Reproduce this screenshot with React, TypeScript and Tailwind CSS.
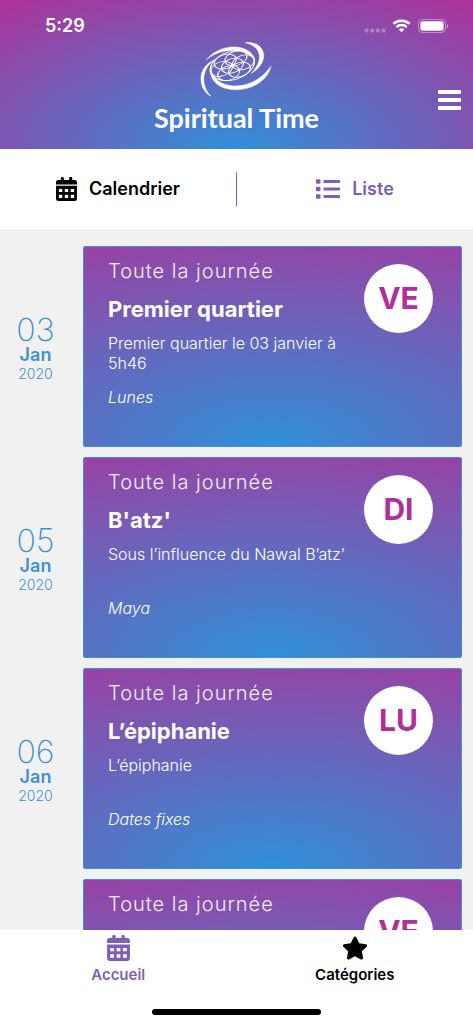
import React from "react";
import { FaList, FaStar } from "react-icons/fa";

type Entry = {
  day: string;
  month: string;
  year: string;
  weekday: string;
  time: string;
  title: string;
  text: string;
  category: string;
};

const entries: Entry[] = [
  { day: "03", month: "Jan", year: "2020", weekday: "VE", time: "Toute la journée", title: "Premier quartier", text: "Premier quartier le 03 janvier à 5h46", category: "Lunes" },
  { day: "05", month: "Jan", year: "2020", weekday: "DI", time: "Toute la journée", title: "B'atz'", text: "Sous l’influence du Nawal B’atz’", category: "Maya" },
  { day: "06", month: "Jan", year: "2020", weekday: "LU", time: "Toute la journée", title: "L’épiphanie", text: "L’épiphanie", category: "Dates fixes" },
  { day: "", month: "", year: "", weekday: "VE", time: "Toute la journée", title: "", text: "", category: "" },
];

function Logo() {
  return (
    <svg viewBox="3 6 270 195" className="h-[65px] w-[90px]" fill="none" stroke="#fff" aria-hidden="true">
      <g fill="#fff" strokeWidth="1.5">
        <path d="M49 71C72 43 112 28 146 34C170 38 190 51 194 72C184 56 166 48 144 45C112 40 78 48 49 71Z" />
        <path d="M166 20C196 16 221 33 221 59C221 80 206 98 184 112C202 92 210 76 208 58C206 38 190 26 166 20Z" />
        <path d="M73 72C48 90 38 115 42 140C45 157 52 170 63 181C44 170 33 152 33 128C33 103 48 82 73 72Z" />
        <path d="M62 94C66 128 91 147 130 150C177 152 216 128 243 91C232 134 187 162 136 161C88 160 56 134 62 94Z" />
      </g>
      <g transform="rotate(-17 127 89) translate(127 89) scale(1 .62)" strokeWidth="3.6">
        <circle r="68" />
        <circle r="34" />
        <circle cx="34" r="34" />
        <circle cx="17" cy="29" r="34" />
        <circle cx="-17" cy="29" r="34" />
        <circle cx="-34" r="34" />
        <circle cx="-17" cy="-29" r="34" />
        <circle cx="17" cy="-29" r="34" />
      </g>
    </svg>
  );
}

function CalendarIcon({ className }: { className: string }) {
  return (
    <svg viewBox="0 0 22 25" className={className} fill="currentColor" aria-hidden="true">
      <path d="M5 1.2a1.2 1.2 0 0 1 1.2-1.2h.8a1.2 1.2 0 0 1 1.2 1.2V3h5.6V1.200a1.200 1.200 0 0 1 1.200-1.200h.8a1.200 1.200 0 0 1 1.200 1.200V3h2.600A2.400 2.400 0 0 1 22 5.400V7.700H0V5.400A2.400 2.400 0 0 1 2.400 3H5z" />
      <path
        fillRule="evenodd"
        d="M0 9.200H22V22.600A2.400 2.400 0 0 1 19.600 25H2.400A2.400 2.400 0 0 1 0 22.600zM3 12.400v3.300h3.600v-3.300zM9.200 12.400v3.300h3.600v-3.300zM15.400 12.400v3.300h3.600v-3.300zM3 18.500v3.300h3.600v-3.300zM9.200 18.500v3.300h3.600v-3.300zM15.400 18.500v3.300h3.600v-3.300z"
      />
    </svg>
  );
}

function StatusIcons() {
  return (
    <svg viewBox="0 0 86 16" className="h-4 w-[86px]" fill="#fff" aria-hidden="true">
      <g opacity=".3">
        <rect x="1.500" y="10.500" width="4" height="4" rx="1.500" />
        <rect x="7.200" y="10.500" width="4" height="4" rx="1.500" />
        <rect x="12.800" y="10.500" width="4" height="4" rx="1.500" />
        <rect x="18.500" y="10.500" width="4" height="4" rx="1.500" />
      </g>
      <g fill="none" stroke="#fff" strokeWidth="2.500">
        <path d="M30.300 5.800a12.200 12.200 0 0 1 16.400 0" />
        <path d="M33.300 9.100a7.600 7.600 0 0 1 10.400 0" />
      </g>
      <path d="M35.800 11.400a4 4 0 0 1 5.400 0L38.500 14.300z" />
      <rect x="55.500" y="1.500" width="27" height="13" rx="3.800" fill="none" stroke="#fff" opacity=".4" />
      <rect x="57.400" y="3.300" width="23.200" height="9.400" rx="2.200" />
      <path d="M84 6v4.200c1.400-.5 1.400-3.700 0-4.200z" opacity=".5" />
    </svg>
  );
}

function EventRow({ entry }: { entry: Entry }) {
  return (
    <li className="flex shrink-0">
      <div className="flex w-[83px] shrink-0 flex-col items-center justify-center pt-1 pr-3 text-[#3d92d4]">
        {entry.day && (
          <>
            <span className="text-[32px] leading-8 font-extralight">{entry.day}</span>
            <span className="text-lg leading-[18px] font-semibold">{entry.month}</span>
            <span className="text-sm leading-5 font-light">{entry.year}</span>
          </>
        )}
      </div>
      <article className="flex min-h-[201px] flex-1 rounded-xs border border-[#3d92d4] bg-[radial-gradient(155%_133%_at_50%_100%,#2f90d8,#b03098)] pt-3 pr-7 pl-6 text-white">
        <div className="flex-1">
          <p className="text-xl leading-6 font-light tracking-wider text-white/90">{entry.time}</p>
          {entry.title && (
            <>
              <h2 className="mt-3 text-[22px] leading-7 font-bold">{entry.title}</h2>
              <p className="mt-[10px] min-h-10 text-base leading-5 font-light">{entry.text}</p>
              <p className="mt-3 text-base leading-6 font-light italic">{entry.category}</p>
            </>
          )}
        </div>
        <div className="mt-[5px] flex size-[69px] shrink-0 items-center justify-center rounded-full bg-white text-[30px] font-bold text-[#b0309a]">
          {entry.weekday}
        </div>
      </article>
    </li>
  );
}

export default function App() {
  return (
    <div className="flex h-screen flex-col overflow-hidden bg-[#f1f1f1] font-['Inter','Liberation_Sans',sans-serif]">
      <header className="shrink-0 bg-[radial-gradient(83%_128%_at_50%_100%,#2f90d8,#b03098)] pb-4 text-white">
        <div className="flex items-center justify-between pt-[14px] pr-6 pl-[45px]">
          <span className="text-lg leading-6 font-semibold">5:29</span>
          <StatusIcons />
        </div>
        <div className="grid grid-cols-[1fr_auto_1fr] items-center">
          <div className="col-start-2 flex flex-col items-center">
            <Logo />
            <h1 className="font-['Lato',sans-serif] text-[27px] leading-[30px] font-bold">Spiritual Time</h1>
          </div>
          <button type="button" aria-label="Menu" className="mr-3 justify-self-end pt-7">
            <svg viewBox="0 0 23 20" className="h-5 w-[23px]" fill="#fff" aria-hidden="true">
              <rect y="0" width="23" height="4" rx="1" />
              <rect y="8" width="23" height="4" rx="1" />
              <rect y="16" width="23" height="4" rx="1" />
            </svg>
          </button>
        </div>
      </header>

      <div className="flex h-20 shrink-0 items-center bg-white text-lg font-semibold">
        <button type="button" className="flex flex-1 items-center justify-center gap-3">
          <CalendarIcon className="h-6 w-[21px]" />
          Calendrier
        </button>
        <div className="h-[34px] w-px bg-[#7d5fb8]" />
        <button type="button" className="flex flex-1 items-center justify-center gap-3 text-[#7d5fb8]">
          <FaList className="size-6" />
          Liste
        </button>
      </div>

      <main className="min-h-0 flex-1 overflow-hidden">
        <ul className="flex flex-col gap-[10px] pt-[17px] pr-[11px]">
          {entries.map((entry, index) => (
            <EventRow key={index} entry={entry} />
          ))}
        </ul>
      </main>

      <nav className="flex shrink-0 flex-col items-center bg-white pt-[5px] pb-[9px]">
        <div className="flex w-full text-[15px] leading-5 font-semibold">
          <a href="#accueil" className="flex flex-1 flex-col items-center gap-1 text-[#7d5fb8]">
            <CalendarIcon className="h-[26px] w-[23px]" />
            Accueil
          </a>
          <a href="#categories" className="flex flex-1 flex-col items-center gap-1">
            <FaStar className="size-[26px]" />
            Catégories
          </a>
        </div>
        <div className="mt-6 h-[6px] w-[169px] rounded-full bg-black" />
      </nav>
    </div>
  );
}
